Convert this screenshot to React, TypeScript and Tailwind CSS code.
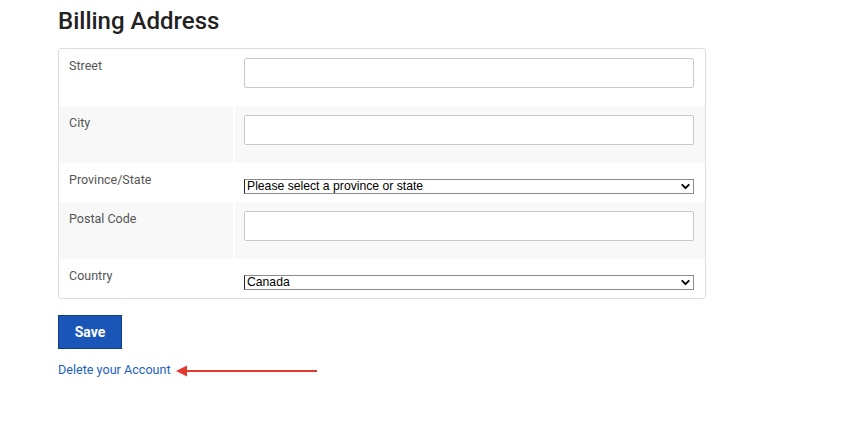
import { ChevronDown } from 'lucide-react';

/* ─── Form rows ────────────────────────────────────────────────────────── */
type Row = {
  label: string;
  kind: 'input' | 'select';
  shaded: boolean;
  value?: string;
};

const rows: Row[] = [
  { label: 'Street', kind: 'input', shaded: false },
  { label: 'City', kind: 'input', shaded: true },
  { label: 'Province/State', kind: 'select', shaded: false, value: 'Please select a province or state' },
  { label: 'Postal Code', kind: 'input', shaded: true },
  { label: 'Country', kind: 'select', shaded: false, value: 'Canada' },
];

function FieldRow({ row }: { row: Row }) {
  const bg = row.shaded ? 'bg-[#f8f8f8]' : 'bg-white';
  const isInput = row.kind === 'input';
  return (
    <div className={`flex ${isInput ? 'h-[57px]' : 'h-[39px]'}`}>
      <div className={`w-[174px] pl-[10px] pt-[8px] text-[12.5px] leading-[18px] text-[#555] ${bg}`}>
        {row.label}
      </div>
      <div className="w-[2px] bg-white" />
      <div className={`flex-1 pl-[9px] pr-[11px] ${isInput ? 'pt-[9px]' : 'pt-[16px]'} ${bg}`}>
        {isInput ? (
          <input
            type="text"
            className="block h-[30px] w-full rounded-[2px] border border-[#c9c9c9] bg-white"
          />
        ) : (
          <div className="relative h-[15px] w-full">
            <select
              defaultValue={row.value}
              className="block h-[15px] w-full appearance-none rounded-none border border-[#8a8a8a] border-l-[#222] bg-white pl-[2px] text-[12.2px] leading-[13px] text-black outline-none"
              style={{ fontFamily: "'Liberation Sans', Arial, sans-serif" }}
            >
              <option>{row.value}</option>
            </select>
            <ChevronDown
              className="pointer-events-none absolute right-[2px] top-[1px] h-[13px] w-[13px] text-black"
              strokeWidth={3.5}
            />
          </div>
        )}
      </div>
    </div>
  );
}

export default function App() {
  return (
    <div
      className="h-[427px] w-full border-b border-[#ececec] bg-white"
      style={{ fontFamily: "Roboto, 'Liberation Sans', sans-serif" }}
    >
      <div className="pl-[58px]">
        {/* ── Heading ── */}
        <h1 className="mt-[6px] h-[30px] text-[24px] leading-[30px] font-medium text-[#222]">
          Billing Address
        </h1>

        {/* ── Address table ── */}
        <div className="mt-[12px] w-[648px] overflow-hidden rounded-[3px] border border-[#dcdcdc]">
          {rows.map((row) => (
            <FieldRow key={row.label} row={row} />
          ))}
        </div>

        {/* ── Actions ── */}
        <button
          type="button"
          className="mt-[16px] block h-[34px] w-[64px] border border-[#0f3c82] bg-[#1a56b8] text-[14px] font-bold text-white"
        >
          Save
        </button>

        <div className="mt-[12px] flex items-center">
          <a href="#" className="text-[12.6px] leading-[18px] text-[#1d5fbf]">
            Delete your Account
          </a>
          <svg width="142" height="12" viewBox="0 0 142 12" className="ml-[5px] mt-[1px]">
            <line x1="9" y1="6" x2="141" y2="6" stroke="#e5392f" strokeWidth="2" />
            <polygon points="0,6 11,0.5 11,11.5" fill="#e5392f" />
          </svg>
        </div>
      </div>
    </div>
  );
}
